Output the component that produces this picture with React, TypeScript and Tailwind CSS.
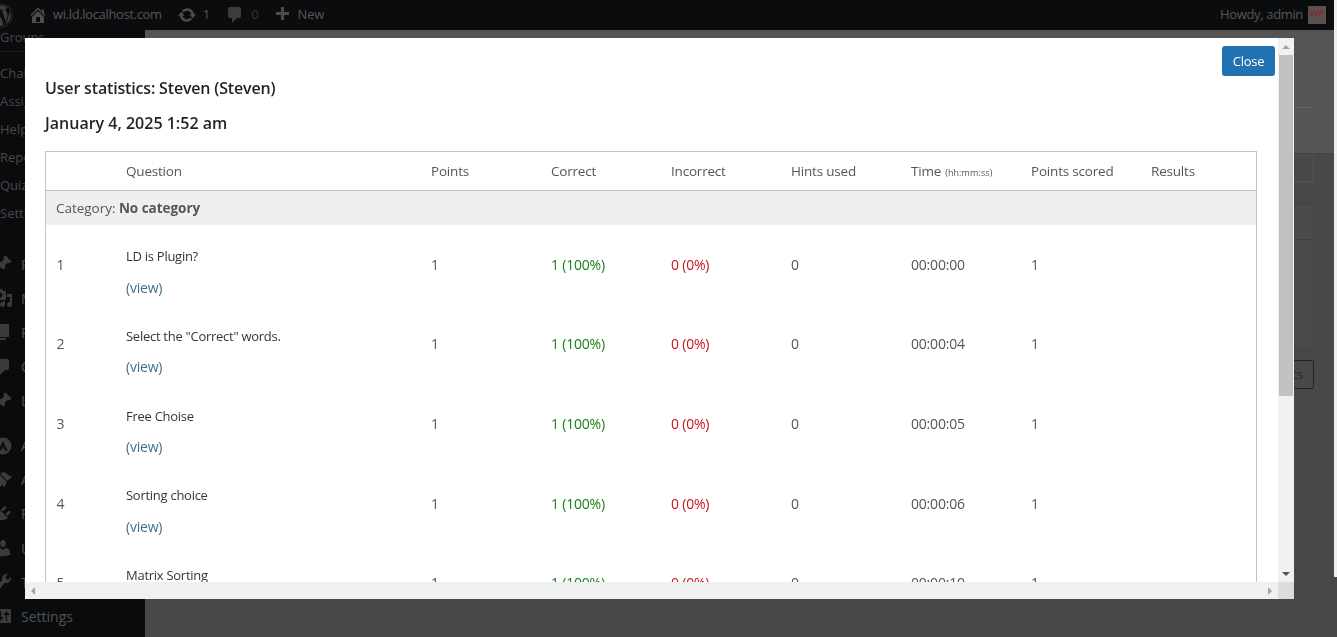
import React from "react";
import { FaWordpress } from "react-icons/fa";

const F = "font-['Open_Sans','Noto_Sans',sans-serif]";

const P = {
  home: "M16 8.5l1.53 1.53-1.06 1.06L10 4.62l-6.47 6.47-1.06-1.06L10 2.5l4 4v-2h2v4zm-6-2.46l6 5.99V18H4v-5.97zM12 17v-5H8v5h4z",
  update: "M10.2 3.28c3.53 0 6.43 2.61 6.92 6h2.08l-3.5 4-3.5-4h2.32c-.45-1.97-2.21-3.45-4.32-3.45-1.45 0-2.73.71-3.54 1.78L4.95 5.66C6.23 4.2 8.11 3.28 10.2 3.28zm-.4 13.44c-3.52 0-6.43-2.61-6.92-6H.8l3.5-4c1.17 1.33 2.33 2.67 3.5 4H5.48c.45 1.97 2.21 3.45 4.32 3.45 1.45 0 2.73-.71 3.54-1.78l1.71 1.95c-1.28 1.46-3.15 2.38-5.25 2.38z",
  comment: "M5 2h9c1.1 0 2 .9 2 2v7c0 1.1-.9 2-2 2h-2l-5 5v-5H5c-1.1 0-2-.9-2-2V4c0-1.1.9-2 2-2z",
  plus: "M17 7v3h-5v5H9v-5H4V7h5V2h3v5h5z",
  pin: "M10.44 3.02l1.82-1.82 6.36 6.35-1.83 1.82c-1.05-.68-2.48-.57-3.41.36l-.75.75c-.92.93-1.04 2.35-.35 3.41l-1.83 1.82-2.41-2.41-2.8 2.79c-.42.42-3.38 2.71-3.8 2.29s1.86-3.39 2.28-3.81l2.79-2.79L4.1 9.36l1.83-1.82c1.05.69 2.48.57 3.41-.36l.75-.75c.93-.92 1.04-2.35.36-3.41z",
  media: "M13 11V4c0-.55-.45-1-1-1h-1.67L9 1H5L3.67 3H2c-.55 0-1 .45-1 1v7c0 .55.45 1 1 1h10c.55 0 1-.45 1-1zM7 4.5c1.38 0 2.5 1.12 2.5 2.5S8.38 9.5 7 9.5 4.5 8.38 4.5 7 5.62 4.5 7 4.5zM14 6h5v10.5c0 1.38-1.12 2.5-2.5 2.5S14 17.88 14 16.5s1.12-2.5 2.5-2.5c.17 0 .34.02.5.05V9h-3V6zm-4 8.05V13h2v3.5c0 1.38-1.12 2.5-2.5 2.5S7 17.88 7 16.5 8.12 14 9.5 14c.17 0 .34.02.5.05z",
  page: "M6 15V2h10v13H6zm-1 1h8v2H3V5h2v11z",
  brush: "M14.48 11.06L7.41 3.99l1.5-1.5c.5-.56 2.3-.47 3.51.32 1.21.8 1.43 1.28 2.91 2.1 1.18.64 2.45 1.26 4.45.85zm-.71.71L6.7 4.7 4.93 6.47c-.39.39-.39 1.02 0 1.41l1.06 1.06c.39.39.39 1.03 0 1.42-.6.6-1.43 1.11-2.21 1.69-.35.26-.7.53-1.01.84C1.43 13.23.4 14.89.97 16.28c.4.97 1.14 1.75 1.99 2.6.99.68 2.26-.33 3.43-1.32.62-.49 1.29-1.06 1.96-1.85.39-.46 1.05-.48 1.45-.08l.98.99c.39.39 1.02.39 1.41 0z",
  plugin: "M13.11 4.36L9.87 7.6 8 5.73l3.24-3.24c.35-.34 1.05-.2 1.56.32.52.51.66 1.21.31 1.55zm-8 1.77l.91-1.12 9.01 9.01-1.19.84c-.71.71-2.63 1.16-3.82 1.16H6.14L4.9 17.26c-.59.59-1.54.59-2.12 0-.59-.58-.59-1.53 0-2.12l1.24-1.24v-3.88c0-1.13.4-3.19 1.09-3.89zm7.26 3.97l3.24-3.24c.34-.35 1.04-.21 1.55.31.52.51.66 1.21.31 1.55l-3.24 3.25z",
  user: "M10 9.25c-2.27 0-2.73-3.44-2.73-3.44C7 4.02 7.82 2 9.97 2c2.16 0 2.98 2.02 2.71 3.81 0 0-.41 3.44-2.68 3.44zm0 2.57L12.72 10c2.39 0 4.52 2.33 4.52 4.53v2.49s-3.65 1.13-7.24 1.13c-3.65 0-7.24-1.13-7.24-1.13v-2.49c0-2.25 1.94-4.48 4.47-4.48z",
  tools: "M16.68 9.77c-1.34 1.34-3.3 1.67-4.95.99l-5.41 6.52c-.99.99-2.59.99-3.58 0s-.99-2.59 0-3.57l6.52-5.42c-.68-1.65-.35-3.61.99-4.95 1.28-1.28 3.12-1.62 4.72-1.06l-2.89 2.89 2.82 2.82 2.86-2.87c.53 1.58.18 3.39-1.08 4.65zM3.81 16.21c.4.39 1.04.39 1.43 0 .4-.4.4-1.04 0-1.43-.39-.4-1.03-.4-1.43 0-.39.39-.39 1.03 0 1.43z",
  settings: "M18 16V4c0-.55-.45-1-1-1H3c-.55 0-1 .45-1 1v12c0 .55.45 1 1 1h14c.55 0 1-.45 1-1zM8 11h1c.55 0 1 .45 1 1s-.45 1-1 1H8v1.5c0 .28-.22.5-.5.5s-.5-.22-.5-.5V13H6c-.55 0-1-.45-1-1s.45-1 1-1h1V5.5c0-.28.22-.5.5-.5s.5.22.5.5V11zm5-2h-1c-.55 0-1-.45-1-1s.45-1 1-1h1V5.5c0-.28.22-.5.5-.5s.5.22.5.5V7h1c.55 0 1 .45 1 1s-.45 1-1 1h-1v5.5c0 .28-.22.5-.5.5s-.5-.22-.5-.5V9z",
  astra: "M10 1.5a8.5 8.5 0 1 0 0 17 8.5 8.5 0 0 0 0-17zM10 5l4.6 9.5h-2.6L10 10.2 8 14.5H5.4z",
};

function Dash({ d, className }: { d: string; className?: string }) {
  return (
    <svg viewBox="0 0 20 20" fill="currentColor" className={`w-5 h-5 shrink-0 ${className ?? ""}`}>
      <path d={d} />
    </svg>
  );
}

const rows = [
  { n: 1, q: "LD is Plugin?", t: "00:00:00" },
  { n: 2, q: 'Select the "Correct" words.', t: "00:00:04" },
  { n: 3, q: "Free Choise", t: "00:00:05" },
  { n: 4, q: "Sorting choice", t: "00:00:06" },
  { n: 5, q: "Matrix Sorting", t: "00:00:10" },
];

const heads = ["", "Question", "Points", "Correct", "Incorrect", "Hints used", "Time", "Points scored", "Results"];

function SubItem({ label }: { label: string }) {
  return <div className="h-7 flex items-center text-[13px] text-[#47484a] whitespace-nowrap">{label}</div>;
}

function MenuItem({ d, label }: { d: string; label: string }) {
  return (
    <div className="h-[34.2px] flex items-center whitespace-nowrap text-[14px] text-[#515356]">
      <Dash d={d} className="text-[#3a3b3c] -ml-[7px] mr-[8px]" />
      {label}
    </div>
  );
}

export default function App() {
  return (
    <div className={`relative w-[1337px] h-[637px] overflow-hidden bg-[#484848] ${F}`}>
      <div className="flex flex-col h-full">
        {/* admin bar */}
        <div className="h-[30px] shrink-0 bg-[#0b0c0e] flex items-center text-[13px] text-[#555759] pr-[11px]">
          <FaWordpress className="text-[25px] text-[#3c3d3e] -ml-[12px] shrink-0" />
          <Dash d={P.home} className="ml-[15px] text-[#4b4c4d]" />
          <span className="ml-[5px] tracking-[-0.35px]">wi.ld.localhost.com</span>
          <Dash d={P.update} className="ml-[15px] text-[#4b4c4d]" />
          <span className="ml-[6px]">1</span>
          <Dash d={P.comment} className="ml-[15px] text-[#3b3c3d]" />
          <span className="ml-[6px] text-[#333435]">0</span>
          <Dash d={P.plus} className="ml-[13px] text-[#4b4c4d]" />
          <span className="ml-[6px] tracking-[-0.2px]">New</span>
          <span className="ml-auto tracking-[-0.35px]">Howdy, admin</span>
          <span className="ml-[5px] w-[18px] h-[18px] bg-[#5d5150] text-[#7c2d2d] text-[9px] font-bold leading-[14px] text-center">WP</span>
        </div>
        <div className="flex flex-1 min-h-0">
          {/* sidebar */}
          <div className="w-[145px] shrink-0 bg-[#0a0b0d] overflow-hidden">
            <div className="-mt-[6px]">
              <div className="border-b border-[#17181a] h-[28px]"><SubItem label="Groups" /></div>
              <div className="h-[8px]" />
              <SubItem label="Challenge Exams" />
              <SubItem label="Assignments" />
              <SubItem label="Help" />
              <SubItem label="Reports" />
              <SubItem label="Quiz" />
              <SubItem label="Settings" />
            </div>
            <div className="mt-[19px]">
              <MenuItem d={P.pin} label="Posts" />
              <MenuItem d={P.media} label="Media" />
              <MenuItem d={P.page} label="Pages" />
              <MenuItem d={P.comment} label="Comments" />
              <MenuItem d={P.pin} label="LearnDash" />
              <div className="h-[10.5px]" />
              <MenuItem d={P.astra} label="Astra" />
              <MenuItem d={P.brush} label="Appearance" />
              <MenuItem d={P.plugin} label="Plugins" />
              <MenuItem d={P.user} label="Users" />
              <MenuItem d={P.tools} label="Tools" />
              <MenuItem d={P.settings} label="Settings" />
            </div>
          </div>
          {/* page behind the overlay */}
          <div className="flex-1 flex flex-col">
            <div className="h-[124px] shrink-0 bg-[#555555] border-b border-[#454545] flex flex-col items-end pr-[22px]">
              <div className="mt-[77px] w-[40px] h-px bg-[#616161]" />
            </div>
            <div className="flex flex-col items-end pr-[20px]">
              <div className="mt-[1px] w-[40px] h-[27px] border border-[#525252]" />
              <div className="mt-[22px] w-[40px] h-[145px] border border-[#434343] bg-[#4b4b4b]">
                <div className="h-[35px] border-b border-[#3e3e3e]" />
              </div>
              <div className="mt-[11px] w-[40px] h-[29px] border border-[#12283a] rounded-[2px] flex items-center justify-end pr-[10px] text-[12px] text-[#1a2c3c]">cs</div>
            </div>
          </div>
          <div className="w-[3px] shrink-0" />
        </div>
      </div>
      {/* window edge */}
      <div className="absolute right-0 top-0 w-[3px] h-[577px] bg-[#efefef]" />

      {/* modal */}
      <div className="absolute left-[25px] top-[38px] w-[1269px] h-[561px] bg-white flex flex-col will-change-transform">
        <div className="flex flex-1 min-h-0">
          <div className="relative flex-1 min-w-0 overflow-hidden pl-[20px]">
            <button className="absolute right-[3px] top-[8px] w-[53px] h-[30px] pt-px rounded-[3px] bg-[#2271b1] text-white text-[13px] tracking-[-0.3px]">Close</button>
            <h1 className="mt-[38px] h-[24px] leading-[24px] text-[16px] font-semibold text-[#1d2327] tracking-[-0.17px]">User statistics: Steven (Steven)</h1>
            <h2 className="mt-[11px] h-[24px] leading-[24px] text-[16px] font-semibold text-[#1d2327]">January 4, 2025 1:52 am</h2>
            <table className="mt-[16px] w-[1212px] table-fixed border-collapse border border-[#c4c4c4] text-[#50575e]">
              <colgroup>
                <col className="w-[70px]" />
                <col className="w-[305px]" />
                <col className="w-[120px]" />
                <col className="w-[120px]" />
                <col className="w-[120px]" />
                <col className="w-[120px]" />
                <col className="w-[120px]" />
                <col className="w-[120px]" />
                <col />
              </colgroup>
              <thead>
                <tr className="h-[39px] border-b border-[#c4c4c4]">
                  {heads.map((h, i) => (
                    <th key={i} className="px-[10.5px] text-left font-normal text-[13.5px] tracking-[-0.2px] whitespace-nowrap">
                      {h}
                      {h === "Time" && <span className="ml-[4px] text-[9px] tracking-[0.1px]">(hh:mm:ss)</span>}
                    </th>
                  ))}
                </tr>
              </thead>
              <tbody>
                <tr className="h-[34px] bg-[#efefef]">
                  <td colSpan={9} className="px-[10px] text-[13.5px] tracking-[-0.03px]">
                    Category: <b className="font-bold">No category</b>
                  </td>
                </tr>
                {rows.map((r) => (
                  <tr key={r.n} className="h-[79.75px] text-[14px] tracking-[-0.2px]">
                    <td className="px-[10.5px] pb-[0.5px]">{r.n}</td>
                    <td className="px-[10.5px] pt-[15px]">
                      <div className="text-[13px] text-[#32373c] leading-[18px] tracking-[-0.27px]">{r.q}</div>
                      <a className="block mt-[13.5px] leading-[18px] text-[#3a6f96]">(view)</a>
                    </td>
                    <td className="px-[10.5px] pb-[0.5px]">1</td>
                    <td className="px-[10.5px] pb-[0.5px] text-[#1a7f1a]">1 (100%)</td>
                    <td className="px-[10.5px] pb-[0.5px] text-[#c4161c]">0 (0%)</td>
                    <td className="px-[10.5px] pb-[0.5px]">0</td>
                    <td className="px-[10.5px] pb-[0.5px]">{r.t}</td>
                    <td className="px-[10.5px] pb-[0.5px]">1</td>
                    <td className="px-[10.5px]" />
                  </tr>
                ))}
              </tbody>
            </table>
          </div>
          {/* vertical scrollbar */}
          <div className="w-[16px] shrink-0 bg-[#f1f1f1] flex flex-col items-center relative">
            <div className="h-[17px] flex items-center justify-center">
              <div className="w-0 h-0 border-x-[4px] border-x-transparent border-b-[4px] border-b-[#a3a3a3]" />
            </div>
            <div className="w-[14px] h-[341px] bg-[#c1c1c1]" />
            <div className="mt-auto h-[17px] flex items-center justify-center">
              <div className="w-0 h-0 border-x-[4px] border-x-transparent border-t-[4px] border-t-[#505050]" />
            </div>
          </div>
        </div>
        {/* horizontal scrollbar */}
        <div className="h-[17px] shrink-0 flex bg-[#f0f0f0]">
          <div className="flex-1 flex items-center justify-between px-[6px]">
            <div className="w-0 h-0 border-y-[4px] border-y-transparent border-r-[4px] border-r-[#a3a3a3]" />
            <div className="w-0 h-0 border-y-[4px] border-y-transparent border-l-[4px] border-l-[#a3a3a3]" />
          </div>
          <div className="w-[16px] bg-[#dcdcdc]" />
        </div>
      </div>
    </div>
  );
}
